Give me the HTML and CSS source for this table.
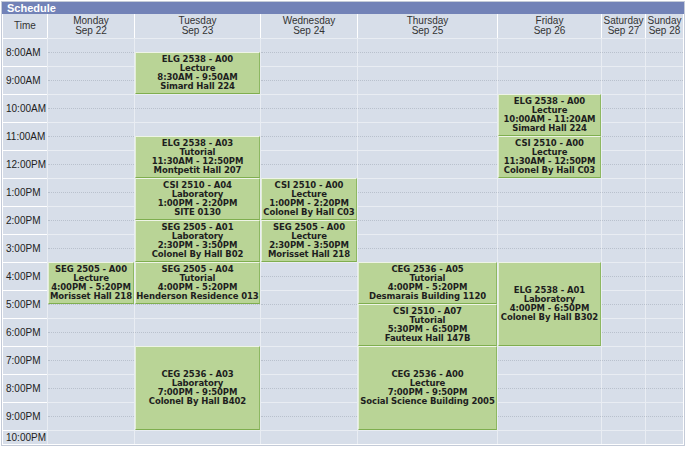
FILE: index.html
```html
<!DOCTYPE html>
<html>
<head>
<meta charset="utf-8">
<link rel="stylesheet" href="styles.css">
</head>
<body>
<div class="panel">
  <div class="title">Schedule</div>
  <div class="table">
    <div class="head">
      <div class="hc">Time</div>
      <div class="hc">Monday<br>Sep 22</div>
      <div class="hc">Tuesday<br>Sep 23</div>
      <div class="hc">Wednesday<br>Sep 24</div>
      <div class="hc">Thursday<br>Sep 25</div>
      <div class="hc">Friday<br>Sep 26</div>
      <div class="hc">Saturday<br>Sep 27</div>
      <div class="hc">Sunday<br>Sep 28</div>
    </div>
    <div class="grid">
      <div class="times">
        <div class="tm">8:00AM</div>
        <div class="tm">9:00AM</div>
        <div class="tm">10:00AM</div>
        <div class="tm">11:00AM</div>
        <div class="tm">12:00PM</div>
        <div class="tm">1:00PM</div>
        <div class="tm">2:00PM</div>
        <div class="tm">3:00PM</div>
        <div class="tm">4:00PM</div>
        <div class="tm">5:00PM</div>
        <div class="tm">6:00PM</div>
        <div class="tm">7:00PM</div>
        <div class="tm">8:00PM</div>
        <div class="tm">9:00PM</div>
        <div class="tm half">10:00PM</div>
      </div>
      <div class="lane d1">
        <div class="slot"></div><div class="slot"></div><div class="slot"></div><div class="slot"></div><div class="slot"></div><div class="slot"></div><div class="slot"></div><div class="slot"></div><div class="slot"></div><div class="slot"></div><div class="slot"></div><div class="slot"></div><div class="slot"></div><div class="slot"></div><div class="slot half"></div>
      </div>
      <div class="lane d2">
        <div class="slot"></div><div class="slot"></div><div class="slot"></div><div class="slot"></div><div class="slot"></div><div class="slot"></div><div class="slot"></div><div class="slot"></div><div class="slot"></div><div class="slot"></div><div class="slot"></div><div class="slot"></div><div class="slot"></div><div class="slot"></div><div class="slot half"></div>
      </div>
      <div class="lane d3">
        <div class="slot"></div><div class="slot"></div><div class="slot"></div><div class="slot"></div><div class="slot"></div><div class="slot"></div><div class="slot"></div><div class="slot"></div><div class="slot"></div><div class="slot"></div><div class="slot"></div><div class="slot"></div><div class="slot"></div><div class="slot"></div><div class="slot half"></div>
      </div>
      <div class="lane d4">
        <div class="slot"></div><div class="slot"></div><div class="slot"></div><div class="slot"></div><div class="slot"></div><div class="slot"></div><div class="slot"></div><div class="slot"></div><div class="slot"></div><div class="slot"></div><div class="slot"></div><div class="slot"></div><div class="slot"></div><div class="slot"></div><div class="slot half"></div>
      </div>
      <div class="lane d5">
        <div class="slot"></div><div class="slot"></div><div class="slot"></div><div class="slot"></div><div class="slot"></div><div class="slot"></div><div class="slot"></div><div class="slot"></div><div class="slot"></div><div class="slot"></div><div class="slot"></div><div class="slot"></div><div class="slot"></div><div class="slot"></div><div class="slot half"></div>
      </div>
      <div class="lane d6">
        <div class="slot"></div><div class="slot"></div><div class="slot"></div><div class="slot"></div><div class="slot"></div><div class="slot"></div><div class="slot"></div><div class="slot"></div><div class="slot"></div><div class="slot"></div><div class="slot"></div><div class="slot"></div><div class="slot"></div><div class="slot"></div><div class="slot half"></div>
      </div>
      <div class="lane d7">
        <div class="slot"></div><div class="slot"></div><div class="slot"></div><div class="slot"></div><div class="slot"></div><div class="slot"></div><div class="slot"></div><div class="slot"></div><div class="slot"></div><div class="slot"></div><div class="slot"></div><div class="slot"></div><div class="slot"></div><div class="slot"></div><div class="slot half"></div>
      </div>

      <div class="ev d1" style="grid-row: 17 / span 3">SEG 2505 - A00<br>Lecture<br>4:00PM - 5:20PM<br>Morisset Hall 218</div>

      <div class="ev d2" style="grid-row: 2 / span 3">ELG 2538 - A00<br>Lecture<br>8:30AM - 9:50AM<br>Simard Hall 224</div>
      <div class="ev d2" style="grid-row: 8 / span 3">ELG 2538 - A03<br>Tutorial<br>11:30AM - 12:50PM<br>Montpetit Hall 207</div>
      <div class="ev d2" style="grid-row: 11 / span 3">CSI 2510 - A04<br>Laboratory<br>1:00PM - 2:20PM<br>SITE 0130</div>
      <div class="ev d2" style="grid-row: 14 / span 3">SEG 2505 - A01<br>Laboratory<br>2:30PM - 3:50PM<br>Colonel By Hall B02</div>
      <div class="ev d2" style="grid-row: 17 / span 3">SEG 2505 - A04<br>Tutorial<br>4:00PM - 5:20PM<br>Henderson Residence 013</div>
      <div class="ev d2" style="grid-row: 23 / span 6">CEG 2536 - A03<br>Laboratory<br>7:00PM - 9:50PM<br>Colonel By Hall B402</div>

      <div class="ev d3" style="grid-row: 11 / span 3">CSI 2510 - A00<br>Lecture<br>1:00PM - 2:20PM<br>Colonel By Hall C03</div>
      <div class="ev d3" style="grid-row: 14 / span 3">SEG 2505 - A00<br>Lecture<br>2:30PM - 3:50PM<br>Morisset Hall 218</div>

      <div class="ev d4" style="grid-row: 17 / span 3">CEG 2536 - A05<br>Tutorial<br>4:00PM - 5:20PM<br>Desmarais Building 1120</div>
      <div class="ev d4" style="grid-row: 20 / span 3">CSI 2510 - A07<br>Tutorial<br>5:30PM - 6:50PM<br>Fauteux Hall 147B</div>
      <div class="ev d4" style="grid-row: 23 / span 6">CEG 2536 - A00<br>Lecture<br>7:00PM - 9:50PM<br>Social Science Building 2005</div>

      <div class="ev d5" style="grid-row: 5 / span 3">ELG 2538 - A00<br>Lecture<br>10:00AM - 11:20AM<br>Simard Hall 224</div>
      <div class="ev d5" style="grid-row: 8 / span 3">CSI 2510 - A00<br>Lecture<br>11:30AM - 12:50PM<br>Colonel By Hall C03</div>
      <div class="ev d5" style="grid-row: 17 / span 6">ELG 2538 - A01<br>Laboratory<br>4:00PM - 6:50PM<br>Colonel By Hall B302</div>
    </div>
  </div>
</div>
</body>
</html>
```

FILE: styles.css
```css
html, body {
  margin: 0;
  padding: 0;
  background: #ffffff;
}

.panel {
  margin: 1px 0 0 1px;
  width: 682px;
  border: 1px solid #c4cbd8;
  background: #ffffff;
}

.title {
  height: 12px;
  line-height: 12px;
  background: #7282b7;
  color: #ffffff;
  font-family: "Liberation Sans", Arial, sans-serif;
  font-weight: bold;
  font-size: 11px;
  padding-left: 5px;
}

.table {
  padding: 0 1px 1px 1px;
}

.head,
.grid {
  display: grid;
  grid-template-columns: 44px 86px 125px 96px 139px 103px 43px 37px;
  column-gap: 1px;
}

.head {
  background: #ffffff;
}

.hc {
  height: 24px;
  background: #d7dee9;
  display: flex;
  align-items: center;
  justify-content: center;
  text-align: center;
  font-family: "Liberation Sans", Arial, sans-serif;
  font-size: 10px;
  line-height: 10px;
  color: #333333;
}

.grid {
  grid-template-rows: repeat(29, 14px);
  background: #e9edf3;
}

.times {
  grid-column: 1;
  grid-row: 1 / -1;
  display: flex;
  flex-direction: column;
  background: #ffffff;
}

.tm {
  height: 28px;
  box-sizing: border-box;
  border-top: 1px solid #ffffff;
  background: #d7dee9;
  display: flex;
  align-items: center;
  padding-left: 3px;
  font-family: "Liberation Sans", Arial, sans-serif;
  font-size: 10px;
  color: #222222;
}

.tm.half {
  height: 14px;
}

.lane {
  grid-row: 1 / -1;
  display: flex;
  flex-direction: column;
  background: #d7dee9;
}

.slot {
  height: 28px;
  box-sizing: border-box;
  border-top: 1px solid #e9edf3;
}

.slot::before {
  content: "";
  display: block;
  height: 13px;
  border-bottom: 1px dotted #b9c1cd;
}

.slot.half {
  height: 14px;
}

.slot.half::before {
  display: none;
}

.d1 { grid-column: 2; }
.d2 { grid-column: 3; }
.d3 { grid-column: 4; }
.d4 { grid-column: 5; }
.d5 { grid-column: 6; }
.d6 { grid-column: 7; }
.d7 { grid-column: 8; }

.ev {
  box-sizing: border-box;
  background: #b9d496;
  border-top: 1px solid #eef4e6;
  border-left: 1px solid #e3eed6;
  border-bottom: 1px solid #7fae4f;
  border-right: 1px solid #8db862;
  display: flex;
  flex-direction: column;
  align-items: center;
  justify-content: center;
  text-align: center;
  white-space: nowrap;
  overflow: hidden;
  font-family: "DejaVu Sans", Verdana, sans-serif;
  font-weight: bold;
  font-size: 8.5px;
  letter-spacing: -0.1px;
  line-height: 9px;
  color: #1e1e1e;
}
```
